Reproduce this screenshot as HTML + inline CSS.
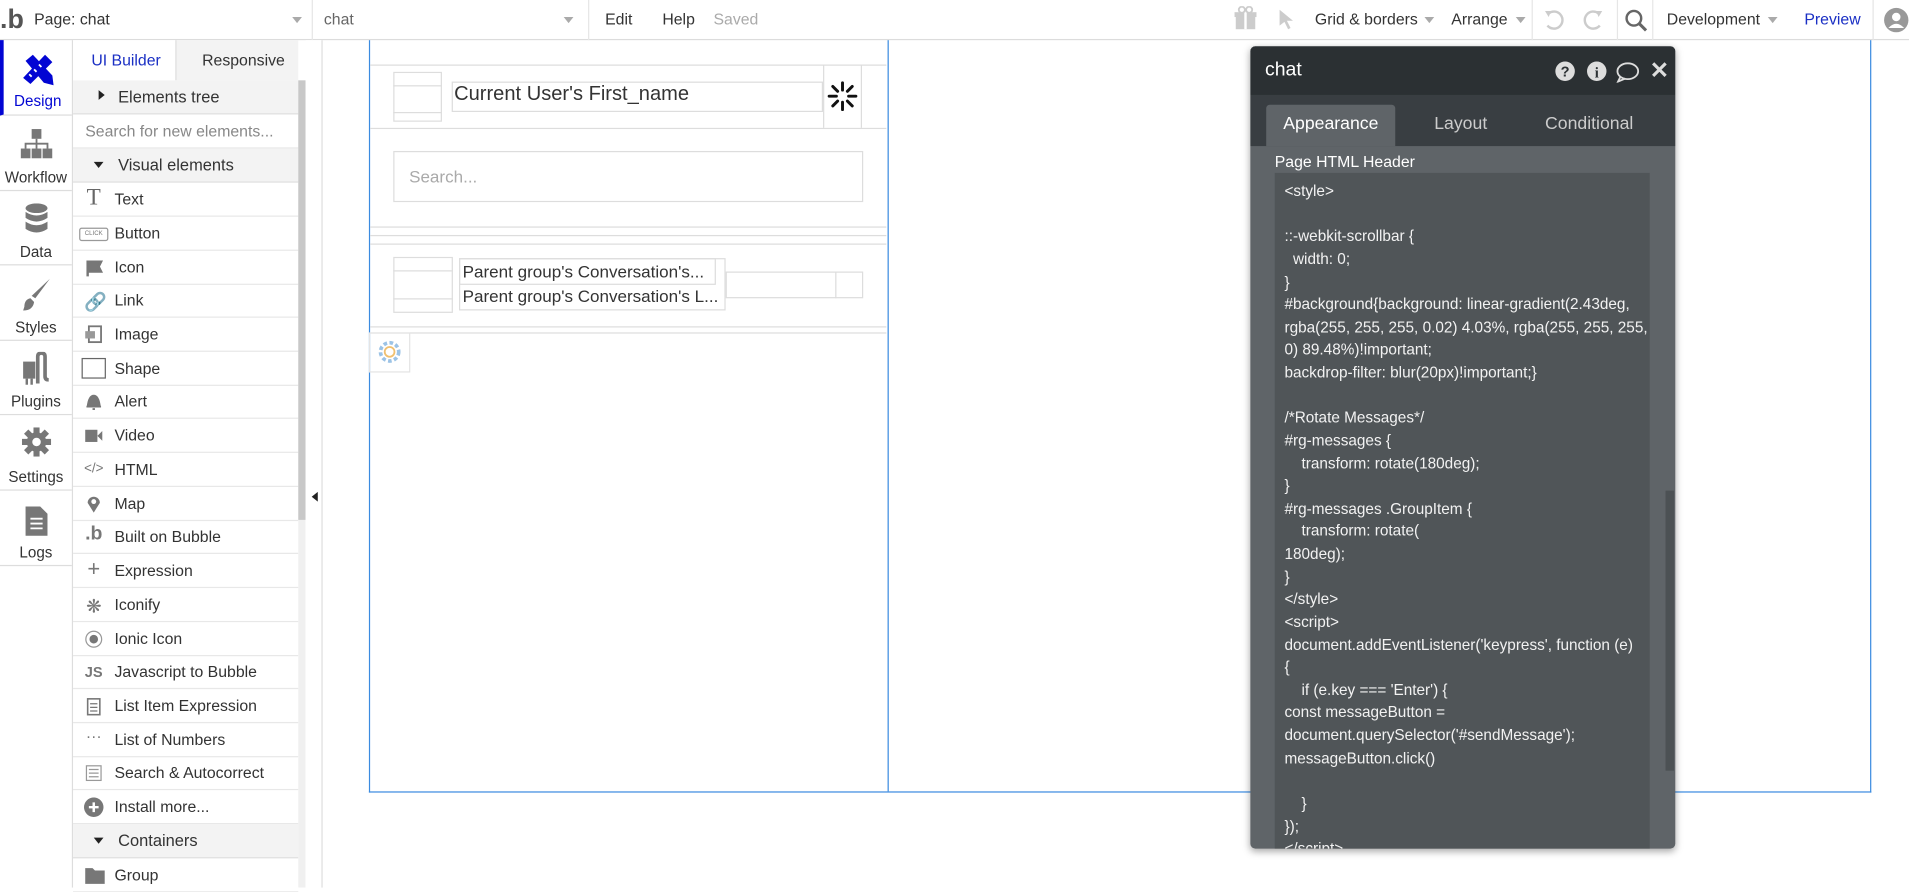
<!DOCTYPE html>
<html><head><meta charset="utf-8">
<style>
*{box-sizing:border-box;margin:0;padding:0}
html,body{width:1909px;height:888px;overflow:hidden;background:#fff}
#w{position:absolute;left:0;top:0;width:1568px;height:729px;transform:scale(1.2175);transform-origin:0 0;font-family:"Liberation Sans",sans-serif;color:#333;font-size:13px}
.a{position:absolute}
.t{position:absolute;white-space:nowrap}
.sep{position:absolute;top:0;width:1px;height:33px;background:#e6e6e6}
.tri{position:absolute;width:0;height:0;border-left:4px solid transparent;border-right:4px solid transparent;border-top:5px solid #aaa}
.nav{position:absolute;left:0;width:59px;border-bottom:1px solid #ddd;text-align:center;font-size:12.5px;color:#333}
.nav span{position:absolute;left:0;right:0;bottom:3px}
.it{position:absolute;left:60px;width:185px;height:28px;border-bottom:1px solid #e8e8e8;font-size:13px}
.it b{position:absolute;left:34px;top:6px;font-weight:normal}
.it i{position:absolute;left:9px;top:6px;width:16px;height:16px;font-style:normal;color:#777;font-size:13px;text-align:center}
.hd{position:absolute;left:60px;width:185px;height:28px;background:#f3f3f3;border-bottom:1px solid #e0e0e0;font-size:13.5px}
.code{position:absolute;left:1047px;top:142px;width:308px;height:555px;overflow:hidden;padding:6px 0 0 8px;font-size:12.6px;line-height:18.62px;color:#f2f2f2;white-space:pre;background:#505558}
.ln{position:absolute;background:#ddd}
</style></head><body><div id="w">
<!-- top bar -->
<div class="a" style="left:0;top:0;width:1568px;height:33px;border-bottom:1px solid #dcdcdc;background:#fff"></div>
<div class="t" style="left:0;top:3px;font-size:22px;color:#555;font-weight:bold">.b</div>
<div class="t" style="left:28px;top:8px">Page: chat</div>
<div class="tri" style="left:240px;top:14px"></div>
<div class="sep" style="left:256px"></div>
<div class="t" style="left:266px;top:8px;color:#666">chat</div>
<div class="tri" style="left:463px;top:14px"></div>
<div class="sep" style="left:483px"></div>
<div class="t" style="left:497px;top:8px">Edit</div>
<div class="t" style="left:544px;top:8px">Help</div>
<div class="t" style="left:586px;top:8px;color:#aaa">Saved</div>
<svg class="a" style="left:1013px;top:5px" width="20" height="20" viewBox="0 0 20 20"><rect x="2" y="8" width="16" height="11" fill="#ccc"/><rect x="1" y="5" width="18" height="4" fill="#ccc"/><rect x="9" y="5" width="2" height="14" fill="#fff"/><circle cx="7" cy="3" r="2.5" fill="none" stroke="#ccc" stroke-width="1.5"/><circle cx="13" cy="3" r="2.5" fill="none" stroke="#ccc" stroke-width="1.5"/></svg>
<svg class="a" style="left:1049px;top:7px" width="16" height="18" viewBox="0 0 16 18"><path d="M2 1 L13 10 L8 10 L11 16 L9 17 L6 11 L2 14Z" fill="#ccc"/></svg>
<div class="t" style="left:1080px;top:8px">Grid &amp; borders</div>
<div class="tri" style="left:1170px;top:14px"></div>
<div class="t" style="left:1192px;top:8px">Arrange</div>
<div class="tri" style="left:1245px;top:14px"></div>
<div class="sep" style="left:1258px"></div>
<svg class="a" style="left:1266px;top:6px" width="20" height="20" viewBox="0 0 20 20"><path d="M6 5 A7 7 0 1 1 5 15" fill="none" stroke="#ccc" stroke-width="2"/><path d="M3 3 L8 3 L6 8Z" fill="#ccc"/></svg>
<svg class="a" style="left:1299px;top:6px" width="20" height="20" viewBox="0 0 20 20"><path d="M14 5 A7 7 0 1 0 15 15" fill="none" stroke="#ccc" stroke-width="2"/><path d="M17 3 L12 3 L14 8Z" fill="#ccc"/></svg>
<div class="sep" style="left:1328px"></div>
<svg class="a" style="left:1334px;top:7px" width="20" height="20" viewBox="0 0 20 20"><circle cx="8" cy="8" r="6" fill="none" stroke="#666" stroke-width="2"/><path d="M12 12 L18 18" stroke="#666" stroke-width="2.5"/></svg>
<div class="sep" style="left:1357px"></div>
<div class="t" style="left:1369px;top:8px">Development</div>
<div class="tri" style="left:1452px;top:14px"></div>
<div class="t" style="left:1482px;top:8px;color:#1a2fc4">Preview</div>
<div class="sep" style="left:1538px"></div>
<svg class="a" style="left:1547px;top:6px" width="21" height="21" viewBox="0 0 21 21"><circle cx="10.5" cy="10.5" r="10" fill="#999"/><circle cx="10.5" cy="8" r="3.5" fill="#fff"/><path d="M4 17 Q10.5 10 17 17Z" fill="#fff"/></svg>

<!-- left nav -->
<div class="a" style="left:59px;top:33px;width:1px;height:696px;background:#ddd"></div>
<div class="nav" style="top:33px;height:62px;border-left:3px solid #0205d3;color:#0205d3"><svg class="a" style="left:13px;top:9px" width="30" height="30" viewBox="0 0 30 30"><path d="M5 8 L11 3 L27 20 L28 28 L20 26Z" fill="#0205d3"/><path d="M3 22 L21 3 L27 9 L9 27Z" fill="#0205d3"/><path d="M8 19 L10 21 M12 15 L14 17 M16 11 L18 13" stroke="#fff" stroke-width="1.5"/></svg><span style="bottom:4px">Design</span></div>
<div class="nav" style="top:95px;height:62px"><svg class="a" style="left:17px;top:10px" width="26" height="26" viewBox="0 0 26 26"><rect x="9" y="1" width="8" height="8" fill="#777"/><path d="M13 9 V13 M4 17 V13 H22 V17 M13 13 V17" stroke="#777" stroke-width="1.5" fill="none"/><rect x="0" y="17" width="8" height="8" fill="#777"/><rect x="9" y="17" width="8" height="8" fill="#777"/><rect x="18" y="17" width="8" height="8" fill="#777"/></svg><span>Workflow</span></div>
<div class="nav" style="top:157px;height:61px"><svg class="a" style="left:20px;top:10px" width="20" height="26" viewBox="0 0 20 26"><ellipse cx="10" cy="4" rx="9" ry="4" fill="#777"/><path d="M1 7 Q10 13 19 7 V12 Q10 18 1 12Z M1 15 Q10 21 19 15 V21 Q10 27 1 21Z" fill="#777"/></svg><span>Data</span></div>
<div class="nav" style="top:218px;height:62px"><svg class="a" style="left:17px;top:10px" width="26" height="28" viewBox="0 0 26 28"><path d="M24 1 L12 17 L9 15 Z" fill="#777"/><path d="M8 17 Q3 18 3 24 L2 27 Q10 27 11 20Z" fill="#777"/></svg><span>Styles</span></div>
<div class="nav" style="top:280px;height:61px"><svg class="a" style="left:17px;top:9px" width="26" height="28" viewBox="0 0 26 28"><rect x="2" y="8" width="10" height="14" fill="#777"/><rect x="4" y="22" width="2" height="5" fill="#777"/><rect x="8" y="22" width="2" height="5" fill="#777"/><path d="M14 26 V4 Q14 1 17 1 Q20 1 20 4 V20 Q20 23 23 23" stroke="#777" stroke-width="3" fill="none"/></svg><span>Plugins</span></div>
<div class="nav" style="top:341px;height:62px"><svg class="a" style="left:18px;top:10px" width="24" height="24" viewBox="0 0 24 24"><circle cx="12" cy="12" r="8" fill="#777"/><path d="M12 0 V24 M0 12 H24 M3.5 3.5 L20.5 20.5 M20.5 3.5 L3.5 20.5" stroke="#777" stroke-width="5"/><circle cx="12" cy="12" r="3.5" fill="#fff"/></svg><span>Settings</span></div>
<div class="nav" style="top:403px;height:62px"><svg class="a" style="left:20px;top:12px" width="20" height="26" viewBox="0 0 20 26"><path d="M1 1 H13 L19 7 V25 H1Z" fill="#777"/><path d="M5 11 H15 M5 15 H15 M5 19 H15" stroke="#fff" stroke-width="1.5"/></svg><span>Logs</span></div>

<!-- panel -->
<div class="a" style="left:60px;top:33px;width:84px;height:33px;background:#fff"></div>
<div class="t" style="left:75px;top:42px;color:#1a2fc4">UI Builder</div>
<div class="a" style="left:144px;top:33px;width:101px;height:33px;background:#f3f3f3;border-left:1px solid #e0e0e0"></div>
<div class="t" style="left:166px;top:42px">Responsive</div>
<div class="hd" style="top:66px"><div class="t" style="left:21px;top:8px;width:0;height:0;border-top:4px solid transparent;border-bottom:4px solid transparent;border-left:5px solid #222"></div><div class="t" style="left:37px;top:6px">Elements tree</div></div>
<div class="it" style="top:94px"><b style="left:10px;color:#888">Search for new elements...</b></div>
<div class="hd" style="top:122px"><div class="t" style="left:17px;top:11px;border-left:4px solid transparent;border-right:4px solid transparent;border-top:5px solid #222"></div><div class="t" style="left:37px;top:6px">Visual elements</div></div>
<div class="it" style="top:150px"><i style="font-family:'Liberation Serif';font-size:19px;top:2px;color:#666">T</i><b>Text</b></div>
<div class="it" style="top:178px"><i style="left:5px;width:24px;height:11px;top:9px;border:1px solid #999;border-radius:2px;font-size:5px;line-height:9px">CLICK</i><b>Button</b></div>
<div class="it" style="top:206px"><i><svg width="16" height="16"><path d="M3 2 V15 M3 3 H14 L12 7 L14 11 H3" stroke="#777" stroke-width="2" fill="#777"/></svg></i><b>Icon</b></div>
<div class="it" style="top:233px"><i style="font-size:15px">&#128279;</i><b>Link</b></div>
<div class="it" style="top:261px"><i><svg width="16" height="16"><rect x="4" y="1" width="10" height="13" fill="none" stroke="#777" stroke-width="1.5"/><rect x="1" y="5" width="8" height="6" fill="#999"/></svg></i><b>Image</b></div>
<div class="it" style="top:289px"><i style="left:7px;width:20px;height:17px;top:5px;border:1px solid #666"></i><b>Shape</b></div>
<div class="it" style="top:316px"><i><svg width="16" height="16"><path d="M3 12 Q4 3 8 3 Q12 3 13 12Z M2 12 H14 M7 14 H9" stroke="#777" fill="#777" stroke-width="1.5"/></svg></i><b>Alert</b></div>
<div class="it" style="top:344px"><i><svg width="16" height="16"><rect x="1" y="3" width="10" height="10" fill="#777"/><path d="M11 8 L15 4 V12Z" fill="#777"/></svg></i><b>Video</b></div>
<div class="it" style="top:372px"><i style="font-size:11px;left:6px;width:22px;top:7px">&lt;/&gt;</i><b>HTML</b></div>
<div class="it" style="top:400px"><i><svg width="16" height="16"><path d="M8 15 L3 7 A5 5 0 1 1 13 7Z" fill="#777"/><circle cx="8" cy="6" r="2" fill="#fff"/></svg></i><b>Map</b></div>
<div class="it" style="top:427px"><i style="font-weight:bold;font-size:16px;top:3px">.b</i><b>Built on Bubble</b></div>
<div class="it" style="top:455px"><i style="font-size:18px;top:2px">+</i><b>Expression</b></div>
<div class="it" style="top:483px"><i style="font-size:15px">&#10059;</i><b>Iconify</b></div>
<div class="it" style="top:511px"><i><svg width="16" height="16"><circle cx="8" cy="8" r="6.5" fill="none" stroke="#999"/><circle cx="8" cy="8" r="3.5" fill="#777"/></svg></i><b>Ionic Icon</b></div>
<div class="it" style="top:538px"><i style="font-weight:bold;font-size:12px;top:7px">JS</i><b>Javascript to Bubble</b></div>
<div class="it" style="top:566px"><i><svg width="16" height="16"><rect x="3" y="2" width="10" height="13" fill="none" stroke="#777" stroke-width="1.3"/><path d="M5 6 H11 M5 9 H11 M5 12 H11" stroke="#777"/></svg></i><b>List Item Expression</b></div>
<div class="it" style="top:594px"><i style="top:3px">···</i><b>List of Numbers</b></div>
<div class="it" style="top:621px"><i><svg width="16" height="16"><rect x="2" y="2" width="12" height="12" fill="none" stroke="#999"/><path d="M4 5 H12 M4 8 H12 M4 11 H12" stroke="#999"/></svg></i><b>Search &amp; Autocorrect</b></div>
<div class="it" style="top:649px"><i><svg width="16" height="16"><circle cx="8" cy="8" r="8" fill="#777"/><path d="M8 4 V12 M4 8 H12" stroke="#fff" stroke-width="2"/></svg></i><b>Install more...</b></div>
<div class="hd" style="top:677px"><div class="t" style="left:17px;top:11px;border-left:4px solid transparent;border-right:4px solid transparent;border-top:5px solid #222"></div><div class="t" style="left:37px;top:6px">Containers</div></div>
<div class="it" style="top:705px"><i><svg width="18" height="16"><path d="M1 2 H7 L9 4 H17 V15 H1Z" fill="#777"/></svg></i><b>Group</b></div>
<!-- scrollbar + gutter -->
<div class="a" style="left:245px;top:66px;width:6px;height:663px;background:#f0f0f0"></div>
<div class="a" style="left:245px;top:66px;width:6px;height:361px;background:#c8c8c8"></div>
<div class="a" style="left:251px;top:33px;width:14px;height:696px;background:#fff;border-right:1px solid #ddd"></div>
<div class="a" style="left:256px;top:404px;border-top:4px solid transparent;border-bottom:4px solid transparent;border-right:5px solid #222"></div>

<!-- canvas -->
<div class="a" style="left:303px;top:33px;width:1234px;height:618px;border:1px solid #3b8be0;border-top:none"></div>
<div class="a" style="left:729px;top:33px;width:1px;height:617px;background:#3b8be0"></div>
<div class="ln" style="left:304px;top:53px;width:424px;height:1px"></div>
<div class="ln" style="left:304px;top:105px;width:424px;height:1px"></div>
<div class="ln" style="left:676px;top:53px;width:1px;height:52px"></div>
<div class="ln" style="left:707px;top:53px;width:1px;height:52px"></div>
<div class="a" style="left:323px;top:59px;width:40px;height:41px;border:1px solid #ddd"></div>
<div class="ln" style="left:323px;top:70px;width:40px;height:1px"></div>
<div class="ln" style="left:323px;top:92px;width:40px;height:1px"></div>
<div class="a" style="left:371px;top:67px;width:305px;height:25px;border:1px solid #ddd"></div>
<div class="t" style="left:373px;top:68px;font-size:16.5px;color:#333">Current User's First_name</div>
<svg class="a" style="left:678px;top:65px" width="28" height="28" viewBox="0 0 28 28"><g stroke="#111" stroke-width="2.4" stroke-linecap="round"><path d="M14 3 V9 M14 19 V25 M3 14 H9 M19 14 H25 M6 6 L10 10 M18 18 L22 22 M22 6 L18 10 M10 18 L6 22"/></g></svg>
<div class="a" style="left:323px;top:124px;width:386px;height:42px;border:1px solid #ddd"></div>
<div class="t" style="left:336px;top:137px;font-size:14px;color:#aaa">Search...</div>
<div class="ln" style="left:304px;top:186px;width:424px;height:1px"></div>
<div class="ln" style="left:304px;top:193px;width:424px;height:1px"></div>
<div class="ln" style="left:304px;top:200px;width:424px;height:1px"></div>
<div class="a" style="left:323px;top:211px;width:49px;height:46px;border:1px solid #ddd"></div>
<div class="ln" style="left:323px;top:222px;width:49px;height:1px"></div>
<div class="ln" style="left:323px;top:245px;width:49px;height:1px"></div>
<div class="a" style="left:377px;top:212px;width:219px;height:43px;border:1px solid #ddd"></div>
<div class="a" style="left:377px;top:212px;width:211px;height:22px;border:1px solid #ddd"></div>
<div class="t" style="left:380px;top:215px;font-size:14px">Parent group's Conversation's...</div>
<div class="t" style="left:380px;top:235px;font-size:14px">Parent group's Conversation's L...</div>
<div class="a" style="left:596px;top:223px;width:113px;height:22px;border:1px solid #ddd"></div>
<div class="ln" style="left:686px;top:223px;width:1px;height:22px"></div>
<div class="ln" style="left:304px;top:268px;width:424px;height:1px"></div>
<div class="ln" style="left:304px;top:273px;width:424px;height:1px"></div>
<div class="a" style="left:303px;top:273px;width:34px;height:33px;border:1px solid #e4e4e4"></div>
<svg class="a" style="left:309px;top:278px" width="22" height="22" viewBox="0 0 22 22"><circle cx="11" cy="11" r="7.5" fill="none" stroke="#9cc3e6" stroke-width="3" stroke-dasharray="3 2"/><circle cx="11" cy="11" r="4" fill="none" stroke="#f0c070" stroke-width="1.5"/></svg>

<!-- property editor -->
<div class="a" style="left:1027px;top:38px;width:349px;height:659px;background:#5f6468;border-radius:4px;box-shadow:0 2px 6px rgba(0,0,0,.35);overflow:hidden">
 <div class="a" style="left:0;top:0;width:349px;height:40px;background:#2b3033"></div>
 <div class="a" style="left:0;top:40px;width:349px;height:42px;background:#393e42"></div>
 <div class="a" style="left:13px;top:48px;width:106px;height:34px;background:#5f6468;border-radius:3px 3px 0 0"></div>
 <div class="a" style="left:341px;top:365px;width:7px;height:230px;background:#4c5154"></div>
</div>
<div class="t" style="left:1039px;top:49px;font-size:16px;color:#fff">chat</div>
<svg class="a" style="left:1277px;top:50px" width="17" height="17"><circle cx="8.5" cy="8.5" r="8" fill="#ddd"/><text x="8.5" y="13" font-size="12" font-weight="bold" text-anchor="middle" fill="#2b3033" font-family="Liberation Sans">?</text></svg>
<svg class="a" style="left:1303px;top:50px" width="17" height="17"><circle cx="8.5" cy="8.5" r="8" fill="#ddd"/><text x="8.5" y="13.5" font-size="12" font-weight="bold" text-anchor="middle" fill="#2b3033" font-family="Liberation Serif">i</text></svg>
<svg class="a" style="left:1327px;top:51px" width="20" height="17"><ellipse cx="10" cy="7.5" rx="8.5" ry="6.5" fill="none" stroke="#ddd" stroke-width="1.5"/><path d="M4 12 L2 16 L8 13.5" fill="none" stroke="#ddd" stroke-width="1.5"/></svg>
<div class="t" style="left:1355px;top:47px;font-size:19px;color:#ddd;font-weight:bold">✕</div>
<div class="t" style="left:1054px;top:94px;font-size:14.5px;color:#fff">Appearance</div>
<div class="t" style="left:1178px;top:94px;font-size:14.5px;color:#ccc">Layout</div>
<div class="t" style="left:1269px;top:94px;font-size:14.5px;color:#ccc">Conditional</div>
<div class="t" style="left:1047px;top:125px;font-size:13px;color:#fff">Page HTML Header</div>
<div class="code">&lt;style&gt;

::-webkit-scrollbar {
  width: 0;
}
#background{background: linear-gradient(2.43deg,
rgba(255, 255, 255, 0.02) 4.03%, rgba(255, 255, 255,
0) 89.48%)!important;
backdrop-filter: blur(20px)!important;}

/*Rotate Messages*/
#rg-messages {
    transform: rotate(180deg);
}
#rg-messages .GroupItem {
    transform: rotate(
180deg);
}
&lt;/style&gt;
&lt;script&gt;
document.addEventListener('keypress', function (e)
{
    if (e.key === 'Enter') {
const messageButton =
document.querySelector('#sendMessage');
messageButton.click()

    }
});
&lt;/script&gt;</div>
</div></body></html>
